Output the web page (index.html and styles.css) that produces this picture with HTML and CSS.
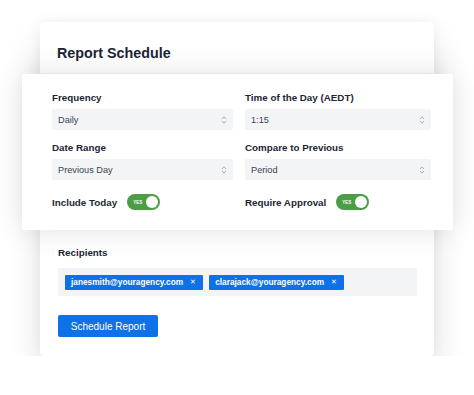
FILE: index.html
```html
<!DOCTYPE html>
<html lang="en">
<head>
  <meta charset="UTF-8">
  <meta name="viewport" content="width=device-width, initial-scale=1.0">
  <title>Report Schedule</title>
  <link rel="stylesheet" href="styles.css">
</head>
<body>
  <div class="stage">
    <div class="schedule-card">
      <div class="schedule-head">
        <h1>Report Schedule</h1>
      </div>

      <!-- Options panel, sits over the card -->
      <div class="options-card">
        <div class="options-grid">
          <div class="field">
            <label>Frequency</label>
            <div class="select">
              <span>Daily</span>
              <svg class="chevrons" viewBox="0 0 6 10" width="6" height="10"><path d="M1 4 L3 1.8 L5 4 M1 6 L3 8.2 L5 6" fill="none" stroke="#a3a8b0" stroke-width="0.9"/></svg>
            </div>
          </div>
          <div class="field">
            <label>Time of the Day (AEDT)</label>
            <div class="select">
              <span>1:15</span>
              <svg class="chevrons" viewBox="0 0 6 10" width="6" height="10"><path d="M1 4 L3 1.8 L5 4 M1 6 L3 8.2 L5 6" fill="none" stroke="#a3a8b0" stroke-width="0.9"/></svg>
            </div>
          </div>
          <div class="field">
            <label>Date Range</label>
            <div class="select">
              <span>Previous Day</span>
              <svg class="chevrons" viewBox="0 0 6 10" width="6" height="10"><path d="M1 4 L3 1.8 L5 4 M1 6 L3 8.2 L5 6" fill="none" stroke="#a3a8b0" stroke-width="0.9"/></svg>
            </div>
          </div>
          <div class="field">
            <label>Compare to Previous</label>
            <div class="select">
              <span>Period</span>
              <svg class="chevrons" viewBox="0 0 6 10" width="6" height="10"><path d="M1 4 L3 1.8 L5 4 M1 6 L3 8.2 L5 6" fill="none" stroke="#a3a8b0" stroke-width="0.9"/></svg>
            </div>
          </div>
          <div class="toggle-row">
            <span class="toggle-label">Include Today</span>
            <span class="toggle"><span class="toggle-text">YES</span><span class="knob"></span></span>
          </div>
          <div class="toggle-row">
            <span class="toggle-label">Require Approval</span>
            <span class="toggle"><span class="toggle-text">YES</span><span class="knob"></span></span>
          </div>
        </div>
      </div>

      <div class="schedule-body">
        <label class="recipients-label">Recipients</label>
        <div class="recipients">
          <span class="chip">janesmith@youragency.com <span class="chip-x">&#x2715;</span></span>
          <span class="chip">clarajack@youragency.com <span class="chip-x">&#x2715;</span></span>
        </div>
        <button class="btn">Schedule Report</button>
      </div>
    </div>
  </div>
</body>
</html>
```

FILE: styles.css
```css
body {
  margin: 0;
  background: #ffffff;
  font-family: 'Liberation Sans', Arial, sans-serif;
  color: #1c2633;
}

.stage {
  padding: 22px 0 0 40px;
}

/* Back card */
.schedule-card {
  width: 394px;
  background: #fff;
  border-radius: 4px;
  box-shadow: 0 18px 34px rgba(0, 0, 0, 0.12), 0 0 14px rgba(0, 0, 0, 0.05);
}

.schedule-head {
  height: 52px;
  padding: 23px 0 0 17px;
  border-bottom: 1px solid #f2f3f5;
  box-sizing: border-box;
}

h1 {
  margin: 0;
  font-size: 14.3px;
  line-height: 16px;
  font-weight: bold;
  color: #1b2534;
}

/* Front card */
.options-card {
  margin: 0 -19px 0 -18px;
  background: #fff;
  padding: 18px 22px 20px 30px;
  box-shadow: 0 0 28px rgba(0, 0, 0, 0.12);
  position: relative;
}

.options-grid {
  display: grid;
  grid-template-columns: 181px 186px;
  column-gap: 12px;
  row-gap: 12px;
}

.field label {
  display: block;
  font-size: 9.8px;
  font-weight: bold;
  line-height: 12px;
  margin-bottom: 5px;
  color: #1c2633;
}

.select {
  height: 21px;
  background: #f3f4f6;
  border-radius: 2px;
  display: flex;
  align-items: center;
  justify-content: space-between;
  padding: 0 6px;
  font-size: 9.2px;
  color: #3a4350;
}

.toggle-row {
  display: flex;
  align-items: center;
  margin-top: 2px;
  height: 16px;
}

.toggle-label {
  font-size: 9.8px;
  font-weight: bold;
  color: #1c2633;
  margin-right: 10px;
}

.toggle {
  width: 33px;
  height: 16px;
  border-radius: 8px;
  background: #4c9e45;
  display: flex;
  align-items: center;
  justify-content: space-between;
  padding: 0 2px 0 6px;
  box-sizing: border-box;
}

.toggle-text {
  font-size: 4.5px;
  font-weight: bold;
  color: #fff;
}

.knob {
  width: 12px;
  height: 12px;
  border-radius: 50%;
  background: #fff;
}

/* Lower part of the back card */
.schedule-body {
  padding: 17px 17px 19px 18px;
}

.recipients-label {
  display: block;
  font-size: 9.8px;
  font-weight: bold;
  line-height: 12px;
  margin-bottom: 9px;
}

.recipients {
  height: 28px;
  background: #f3f4f6;
  display: flex;
  align-items: center;
  gap: 6px;
  padding: 0 7px;
}

.chip {
  height: 15px;
  background: #0d71e8;
  color: #fff;
  font-size: 8.3px;
  font-weight: bold;
  display: flex;
  align-items: center;
  padding: 0 7px 0 6px;
  border-radius: 1px;
}

.chip-x {
  font-weight: normal;
  font-size: 7px;
  margin-left: 7px;
}

.btn {
  margin-top: 19px;
  width: 100px;
  height: 22px;
  background: #0d71e8;
  color: #fff;
  border: none;
  border-radius: 2px;
  font-family: 'Liberation Sans', Arial, sans-serif;
  font-size: 10px;
  padding: 0;
}
```
